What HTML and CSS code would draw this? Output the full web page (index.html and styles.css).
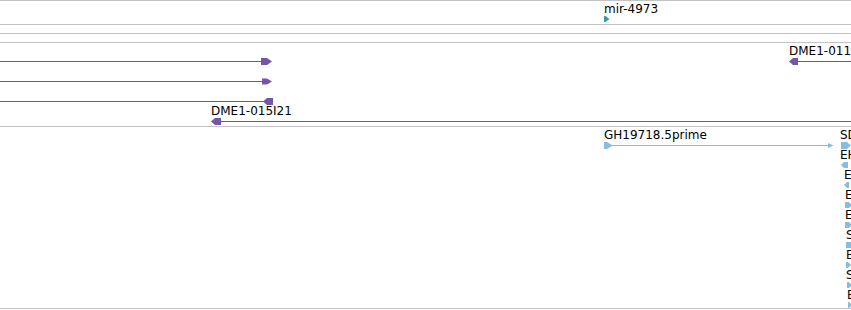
FILE: index.html
```html
<!DOCTYPE html>
<html>
<head>
<meta charset="utf-8">
<link rel="stylesheet" href="styles.css">
</head>
<body>
<div class="tracks">
  <div class="track t-mirna">
    <div class="label" style="left:604px;top:1px">mir-4973</div>
    <svg class="glyph teal" style="left:604px;top:15px" width="6" height="6" viewBox="0 0 6 6"><polygon points="0,0 1.5,0 5.5,3 1.5,6 0,6"/></svg>
  </div>
  <div class="track t-thin"></div>
  <div class="track t-thin"></div>
  <div class="track t-clones">
    <svg class="glyph purple" style="left:0;top:15px" width="273" height="7" viewBox="0 0 273 7"><line x1="0" y1="3.5" x2="262" y2="3.5"/><polygon points="261,0 267,0 272,3.5 267,7 261,7"/></svg>
    <svg class="glyph purple" style="left:0;top:35px" width="273" height="7" viewBox="0 0 273 7"><line x1="0" y1="3.5" x2="263" y2="3.5"/><polygon points="262,0.5 267,0.5 272,3.5 267,6.5 262,6.5"/></svg>
    <svg class="glyph purple" style="left:0;top:55px" width="274" height="7" viewBox="0 0 274 7"><line x1="0" y1="3.5" x2="264" y2="3.5"/><polygon points="263,3.5 267,0 273,0 273,7 267,7"/></svg>
    <div class="label" style="left:211px;top:61px">DME1-015I21</div>
    <svg class="glyph purple" style="left:211px;top:75px" width="640" height="7" viewBox="0 0 640 7"><line x1="9" y1="3.5" x2="640" y2="3.5"/><polygon points="0,3.5 4,0 10,0 10,7 4,7"/></svg>
    <div class="label" style="left:789px;top:1px">DME1-011I</div>
    <svg class="glyph purple" style="left:789px;top:15px" width="62" height="7" viewBox="0 0 62 7"><line x1="9" y1="3.5" x2="62" y2="3.5"/><polygon points="0,3.5 4,0 9,0 9,7 4,7"/></svg>
  </div>
  <div class="track t-ests">
    <div class="label" style="left:604px;top:1px">GH19718.5prime</div>
    <svg class="glyph blue" style="left:604px;top:15px" width="230" height="7" viewBox="0 0 230 7"><line x1="4" y1="3.5" x2="226" y2="3.5"/><polygon points="0,0 3,0 8,3 8,4 3,7 0,7"/><polygon points="224,1 229.5,3.5 224,6"/></svg>

    <div class="label" style="left:840px;top:1px">SD</div>
    <svg class="glyph blue" style="left:841px;top:15px" width="10" height="7" viewBox="0 0 10 7"><polygon points="0,0 6,0 10,3.5 6,7 0,7"/></svg>
    <div class="label" style="left:840px;top:21px">EH</div>
    <svg class="glyph blue" style="left:841px;top:35px" width="7" height="6" viewBox="0 0 7 6"><polygon points="0,3 3,0 7,0 7,6 3,6"/></svg>
    <div class="label" style="left:844px;top:41px">E</div>
    <svg class="glyph blue" style="left:844px;top:55px" width="5" height="6" viewBox="0 0 5 6"><polygon points="0,3 3,0 5,0 5,6 3,6"/></svg>
    <div class="label" style="left:845px;top:61px">E</div>
    <svg class="glyph blue" style="left:845px;top:75px" width="7" height="6" viewBox="0 0 7 6"><polygon points="0,0 4,0 7,3 4,6 0,6"/></svg>
    <div class="label" style="left:845px;top:81px">E</div>
    <svg class="glyph blue" style="left:845px;top:95px" width="7" height="6" viewBox="0 0 7 6"><polygon points="0,0 4,0 7,3 4,6 0,6"/></svg>
    <div class="label" style="left:846px;top:101px">S</div>
    <svg class="glyph blue" style="left:846px;top:115px" width="6" height="6" viewBox="0 0 6 6"><polygon points="0,0 6,0 6,6 0,6"/></svg>
    <div class="label" style="left:846px;top:121px">E</div>
    <svg class="glyph blue" style="left:846px;top:135px" width="5" height="6" viewBox="0 0 5 6"><polygon points="0,0 2,0 5,3 2,6 0,6"/></svg>
    <div class="label" style="left:846px;top:141px">S</div>
    <svg class="glyph blue" style="left:847px;top:155px" width="5" height="6" viewBox="0 0 5 6"><polygon points="0,0 2,0 5,3 2,6 0,6"/></svg>
    <div class="label" style="left:847px;top:161px">E</div>
    <svg class="glyph blue" style="left:848px;top:175px" width="4" height="6" viewBox="0 0 4 6"><polygon points="0,0 1,0 4,3 1,6 0,6"/></svg>
  </div>
</div>
</body>
</html>
```
FILE: styles.css
```css
html, body {
  margin: 0;
  padding: 0;
  background: #ffffff;
  overflow: hidden;
}
body {
  width: 851px;
  height: 310px;
  font-family: "DejaVu Sans", sans-serif;
  font-size: 12px;
  line-height: 14px;
  color: #000;
}
.tracks {
  display: flex;
  flex-direction: column;
  border-top: 1px solid #c3c3c3;
}
.track {
  position: relative;
  overflow: hidden;
  border-bottom: 1px solid #c3c3c3;
}
.t-mirna { height: 23px; }
.t-thin { height: 8px; }
.t-clones { height: 83px; }
.t-ests { height: 181px; }
.label {
  position: absolute;
  white-space: nowrap;
}
.glyph {
  position: absolute;
  display: block;
  overflow: visible;
}
.glyph line {
  stroke-width: 1;
  shape-rendering: crispEdges;
}
.purple polygon { fill: #7356a6; }
.purple line { stroke: #6e559e; }
.teal polygon { fill: #3a9aa6; }
.blue polygon { fill: #86bde2; }
.blue line { stroke: #86bde2; }
```
